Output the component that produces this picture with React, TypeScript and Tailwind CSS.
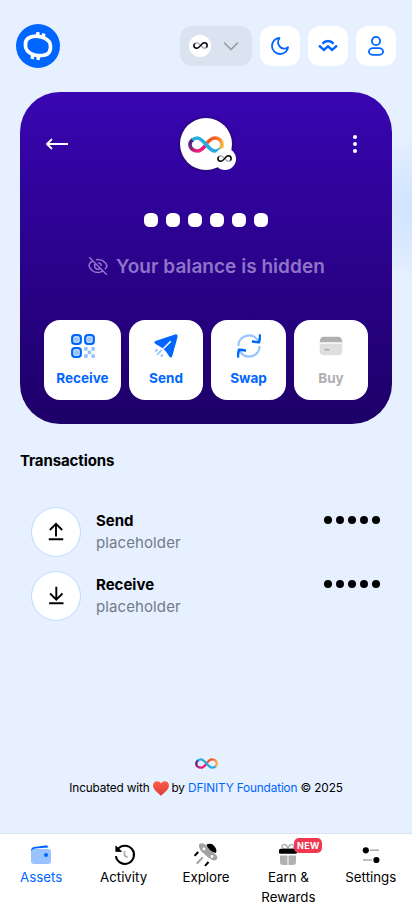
import React from 'react';

function Infinity({ className, id }: { className: string; id: string }) {
  return (
    <svg viewBox="0 0 36 17" className={className} fill="none" strokeWidth="3.7">
      <defs>
        <linearGradient id={id + 'p'} x1="2" y1="3" x2="15" y2="15" gradientUnits="userSpaceOnUse">
          <stop offset="0.2" stopColor="#522785" />
          <stop offset="0.75" stopColor="#ed1e79" />
        </linearGradient>
        <linearGradient id={id + 'o'} x1="21" y1="3" x2="34" y2="13" gradientUnits="userSpaceOnUse">
          <stop offset="0.2" stopColor="#f15a24" />
          <stop offset="0.8" stopColor="#fbb03b" />
        </linearGradient>
      </defs>
      <path d="M5 3.6C3 5 2 6.5 2 8.5C2 12 5 15 9.3 15C12.5 15 15 12.6 18 8.8" stroke={`url(#${id}p)`} />
      <path d="M18 8.2C21 4.5 23.5 2 26.7 2C31 2 34 5 34 8.5C34 10.5 33.5 11.8 32 13.2" stroke={`url(#${id}o)`} />
      <path d="M4.5 4C6 2.5 7.8 2 9.3 2C15.2 2 20.8 15 26.7 15C29 15 31 14.2 32.3 13" stroke="#29abe2" />
    </svg>
  );
}

function MonoInfinity() {
  return (
    <svg viewBox="0 0 36 17" className="w-[15px]" fill="none" strokeWidth="3.6">
      <path d="M4.5 4C6 2.5 7.8 2 9.3 2C15.2 2 20.8 15 26.7 15C29 15 31 14.2 32.3 13" stroke="#a3acb8" />
      <path d="M5 3.6C3 5 2 6.5 2 8.5C2 12 5 15 9.3 15C12.5 15 15 12.6 17 10" stroke="#000" />
      <path d="M17 10C20.5 5.5 23 2 26.7 2C31 2 34 5 34 8.5C34 10.5 33.5 11.8 32 13.2" stroke="#000" />
    </svg>
  );
}

function OisyLogo() {
  return (
    <svg viewBox="0 0 44 44" className="size-11">
      <circle cx="22" cy="22" r="22" fill="#0066ff" />
      <g fill="none" stroke="#fff" strokeWidth="3.7">
        <path d="M16.8 12.5C25 11.2 34 15.2 34.4 21C35.2 26.8 33.2 30.3 28 31.3C18.5 33 10.3 28.5 9.6 22.6C8.7 16.8 11.6 13.4 16.8 12.5Z" />
        <path d="M22 8.1L21.4 13M28 9.5L26.7 14M16 35L17.1 30.5M22 36L22.6 31" strokeWidth="3.4" />
      </g>
    </svg>
  );
}

const tile = 'flex size-10 items-center justify-center rounded-xl bg-white text-[#0066ff]';

function Header() {
  return (
    <header className="flex h-[92px] items-start justify-between px-4 pt-6">
      <OisyLogo />
      <div className="flex gap-2 pt-0.5">
        <div className="flex h-10 w-[72px] items-center justify-between rounded-xl bg-[#dce3f0] pr-3 pl-[9px]">
          <span className="flex size-[22px] items-center justify-center rounded-full bg-white">
            <MonoInfinity />
          </span>
          <svg viewBox="0 0 18 12" className="w-[18px]" fill="none" stroke="#999fa8" strokeWidth="1.7">
            <path d="M2 2.5L9 9.5L16 2.5" />
          </svg>
        </div>
        <div className={tile}>
          <svg viewBox="0 0 20 20" className="size-5" fill="none" stroke="currentColor" strokeWidth="1.8" strokeLinejoin="round">
            <path d="M9.5 2C5.2 2 2 5.6 2 10C2 14.5 5.5 18 10 18C14.5 18 17.9 14.6 18 11.2C16 13.3 12.3 13.1 10.2 11C7.8 8.6 7.6 5 9.5 2Z" />
          </svg>
        </div>
        <div className={tile}>
          <svg viewBox="0 0 20 20" className="size-5" fill="none" stroke="currentColor" strokeWidth="2.4">
            <path d="M1 9.6L5.9 14L10 10.3L14.1 14L19 9.6" />
            <path d="M4.4 7.6C7.8 4.1 12.2 4.1 15.6 7.6" />
          </svg>
        </div>
        <div className={tile}>
          <svg viewBox="0 0 20 20" className="size-5" fill="none" stroke="currentColor" strokeWidth="1.8">
            <circle cx="10" cy="5" r="4.1" />
            <rect x="2.9" y="12.1" width="14.2" height="6.8" rx="4.2" ry="3.4" />
          </svg>
        </div>
      </div>
    </header>
  );
}

function QrIcon() {
  return (
    <svg viewBox="0 0 24 24" className="size-6">
      {[[1.2, 1.2], [14.2, 1.2], [1.2, 14.2]].map(([x, y]) => (
        <g key={`${x}-${y}`}>
          <rect x={x} y={y} width="8.6" height="8.6" rx="2.8" fill="none" stroke="#0066ff" strokeWidth="2.3" />
          <rect x={x + 1.7} y={y + 1.7} width="5.2" height="5.2" rx="2" fill="#99c2ff" />
        </g>
      ))}
      {[[13, 13], [20.3, 13], [16.6, 16.6], [13, 20.3], [20.3, 20.3]].map(([x, y]) => (
        <rect key={`${x}-${y}`} x={x} y={y} width="3.7" height="3.7" rx="0.9" fill="#99c2ff" />
      ))}
    </svg>
  );
}

function SendIcon() {
  return (
    <svg viewBox="0 0 24 24" className="size-6">
      <path d="M1.5 7L21 0.4Q24 -.2 23.6 2.8L18.3 22Q17.3 24.8 15.5 22.7L11.8 17.2L7.2 13.2L1.2 9.7Q-.5 8 1.5 7Z" fill="#0066ff" />
      <path d="M16.8 7.2L9 15" stroke="#fff" strokeWidth="1.5" />
      <path d="M3.5 15.2L1.2 17.5M7.5 16.2L3 20.8M9 20.5L6.8 22.7" stroke="#99c2ff" strokeWidth="1.8" />
    </svg>
  );
}

function SwapIcon() {
  return (
    <svg viewBox="0 0 24 24" className="size-6" fill="none" strokeWidth="2.3">
      <path d="M1.3 12C1.5 1 15.5-2.5 21.3 7.2M22.7 12C22.5 23 8.5 26.5 2.7 16.8" stroke="#99c2ff" />
      <path d="M22.9 .3C23.3 3 22.8 5.7 22 8.2C19.5 8.2 17.2 7.9 15 7.2M1.1 23.7C.7 21 1.2 18.3 2 15.8C4.5 15.8 6.8 16.1 9 16.8" stroke="#0066ff" strokeWidth="2.5" />
    </svg>
  );
}

function BuyIcon() {
  return (
    <svg viewBox="0 0 24 24" className="size-6">
      <path d="M.7 8.5H23.3V17Q23.3 21.3 19 21.3H5Q.7 21.3 .7 17Z" fill="#dedede" />
      <path d="M.7 8.5Q.7 2.7 5 2.7H19Q23.3 2.7 23.3 8.5Z" fill="#b0b0b0" />
      <path d="M.5 9H23.5" stroke="#fff" strokeWidth="1.2" />
      <path d="M5.5 15.7H10.5" stroke="#a6a6a6" strokeWidth="1.5" />
    </svg>
  );
}

const action = 'flex h-20 flex-col items-center gap-[11px] rounded-2xl bg-white pt-3.5 text-[13.5px] leading-4.5 font-bold';

function BalanceCard() {
  return (
    <section className="mx-5 h-[332px] rounded-[40px] bg-linear-to-b from-[#3906b2] to-[#1d0068] px-6 pt-[26px] text-white">
      <div className="flex h-[52px] items-center justify-between pr-[11px] pl-0.5">
        <svg viewBox="0 0 22 12" className="h-3 w-[22px]" fill="none" stroke="currentColor" strokeWidth="1.9" strokeLinejoin="round" strokeLinecap="round">
          <path d="M21.3 6H1M5.4 1.6L1 6L5.4 10.4" />
        </svg>
        <div className="relative ml-[-10px] flex size-[52px] items-center justify-center rounded-full bg-white shadow-[0_0_3px_#000a]">
          <Infinity id="t" className="w-9" />
          <span className="absolute right-[-4px] bottom-0 flex size-[22px] items-center justify-center rounded-full bg-white">
            <MonoInfinity />
          </span>
        </div>
        <svg viewBox="0 0 4 18" className="h-[18px] w-1" fill="currentColor">
          <circle cx="2" cy="2" r="2" /><circle cx="2" cy="9" r="2" /><circle cx="2" cy="16" r="2" />
        </svg>
      </div>
      <div className="mt-[43px] flex justify-center gap-2">
        {[0, 1, 2, 3, 4, 5].map((i) => <span key={i} className="size-3.5 rounded-[5.5px] bg-white" />)}
      </div>
      <div className="mt-[25px] flex h-7 items-center gap-2 pl-11 text-[#8f74c8]">
        <svg viewBox="0 0 20 20" className="size-5 shrink-0" fill="none" stroke="currentColor" strokeWidth="1.5">
          <path d="M1.2 1.2L18.8 18.8M4.5 4.8C2.5 6.2 1 8.7 1 10C2.5 14 6 16.5 10 16.5C11.8 16.5 13.2 16 14.4 15.2M8 3.7C13.5 2.7 17.5 6 19 10C18.6 11.1 17.8 12.3 16.8 13.3M7.5 7.5C5 10.3 8.2 15 12 12.5M10.2 6.8C12.3 7 13.3 8.6 13.3 10" />
        </svg>
        <span className="pt-0.5 text-[19px] leading-7 font-semibold tracking-[0.03px] whitespace-nowrap">Your balance is hidden</span>
      </div>
      <div className="mt-10 grid grid-cols-[77px_74px_75px_74px] gap-2 text-[#0066ff]">
        <div className={action}><QrIcon /><span>Receive</span></div>
        <div className={action}><SendIcon /><span>Send</span></div>
        <div className={action}><SwapIcon /><span>Swap</span></div>
        <div className={action + ' text-[#b0b0b0]'}><BuyIcon /><span>Buy</span></div>
      </div>
    </section>
  );
}

function Transaction({ name, down = false }: { name: string; down?: boolean }) {
  return (
    <li className="flex h-16 items-center">
      <span className="flex size-[50px] items-center justify-center rounded-full border border-[#bfd7ff] bg-white">
        <svg viewBox="0 0 24 24" className="size-6" fill="none" stroke="#000" strokeWidth="1.9">
          {down ? <path d="M12.3 2.7V15.5M6.1 9.5L12.3 15.7L18.5 9.5M5.1 19.3H19.5" /> : <path d="M12 16.5V4M5.8 10L12 3.8L18.2 10M4.8 19.3H19.2" />}
        </svg>
      </span>
      <span className="ml-[15px] flex flex-1 flex-col pb-px text-[15px] leading-[22px]">
        <span className="font-bold text-black">{name}</span>
        <span className="tracking-[0.1px] text-[#737b88]">placeholder</span>
      </span>
      <span className="flex gap-1 pb-6">
        {[0, 1, 2, 3, 4].map((i) => <span key={i} className="size-2 rounded-full bg-black" />)}
      </span>
    </li>
  );
}

function WalletIcon() {
  return (
    <svg viewBox="0 0 24 24" className="size-6">
      <rect x="2" y="6" width="20" height="15" rx="3" fill="#99c2ff" />
      <path d="M2 8Q2 4.3 5 3.9L18 2.2L19.5 4.6L6.5 5.6Q4 5.8 2 8Z" fill="#0066ff" />
      <circle cx="17" cy="12" r="2" fill="#0066ff" />
    </svg>
  );
}

function HistoryIcon() {
  return (
    <svg viewBox="0 0 24 24" className="size-6 translate-x-px" fill="none">
      <path d="M4.7 6.2A9.1 9.1 0 1 1 2.9 13.2" stroke="#000" strokeWidth="2.1" />
      <path d="M2.8 3V8.4H8.6Z" fill="#000" stroke="#000" strokeWidth="0.8" />
      <path d="M11.5 8V12.5L14.5 14.5" stroke="#aaa" strokeWidth="1.7" />
    </svg>
  );
}

function RocketIcon() {
  return (
    <svg viewBox="0 0 24 24" className="size-6 overflow-visible">
      <path d="M5.3 4.5Q3.8 .5 7.5 .3Q10.8 .3 14 4.2L20.5 10.5Q23.8 13 23.3 15.8Q21.5 18.2 18.3 17L13.5 14L8 9Q6 7 5.3 4.5Z" fill="#a3a3a3" />
      <path d="M12.5 1.6Q16.5-.4 19.5 2.2Q23.5 6 22 10Q18.5 9.5 15.8 6.8Q13 4.5 12.5 1.6Z" fill="#000" />
      <circle cx="10" cy="6" r="1.4" fill="#fff" /><circle cx="18" cy="13.5" r="1.4" fill="#fff" />
      <path d="M4.2 9L.6 12.9M14.5 19L11 22.9" stroke="#000" strokeWidth="2" />
      <path d="M8.8 14.2L2.7 20.8" stroke="#a3a3a3" strokeWidth="2" />
    </svg>
  );
}

function GiftIcon() {
  return (
    <svg viewBox="0 0 24 24" className="size-6">
      <path d="M12 6C5.5 7 4.5 2 7.5 1.6C10.5 1.2 11.5 3.5 12 6C12.5 3.5 13.5 1.2 16.5 1.6C19.5 2 18.5 7 12 6Z" fill="none" stroke="#b0b0b0" strokeWidth="1.4" />
      <rect x="3" y="5.7" width="18" height="5" rx="1.5" fill="#000" />
      <path d="M4 12.5H11.5V22H7Q4 22 4 19ZM12.5 12.5H20V19Q20 22 17 22H12.5Z" fill="#b0b0b0" />
    </svg>
  );
}

function SettingsIcon() {
  return (
    <svg viewBox="0 0 24 24" className="size-6" strokeWidth="1.5" stroke="#aaa">
      <path d="M11 7.3H20M4 17H13" />
      <circle cx="6.8" cy="7.3" r="3.1" fill="#000" stroke="none" /><circle cx="17.4" cy="17" r="3.1" fill="#000" stroke="none" />
    </svg>
  );
}

const navItem = 'flex flex-col items-center pt-[9px] text-[13.3px] leading-5';

export default function App() {
  return (
    <main className="flex h-[915px] w-[412px] flex-col overflow-hidden bg-[#e6f0ff] bg-[radial-gradient(ellipse_110px_75px_at_440px_208px,#cde1ff_0%,#d3e5ff_35%,transparent_100%)] font-['Inter','Liberation_Sans',sans-serif] text-black">
      <Header />
      <BalanceCard />
      <h2 className="mt-[25px] pl-5 text-[15px] leading-6 font-bold tracking-[-0.1px]">Transactions</h2>
      <ul className="mt-[27px] pr-8 pl-[31px]">
        <Transaction name="Send" />
        <Transaction name="Receive" down />
      </ul>
      <footer className="mt-[130px] flex flex-col items-center text-[11.8px] leading-4">
        <Infinity id="f" className="h-[11px] w-[23px]" />
        <p className="mt-[11px] flex items-center tracking-[-0.15px] whitespace-nowrap">
          Incubated with
          <svg viewBox="0 0 16 15" className="mx-[3px] h-[15px] w-4">
            <defs><linearGradient id="heart" x1="0" y1="0" x2="0" y2="1"><stop stopColor="#ff5b47" /><stop offset="1" stopColor="#d93e36" /></linearGradient></defs>
            <path d="M8 15C5.5 11.8 0 9 0 4.5C0 0 6-1.2 8 2.6C10-1.2 16 0 16 4.5C16 9 10.5 11.8 8 15Z" fill="url(#heart)" />
          </svg>
          by&nbsp;<span className="text-[#0066ff]">DFINITY Foundation</span>&nbsp;© 2025
        </p>
      </footer>
      <nav className="mt-auto grid h-[82px] grid-cols-5 border-t border-[#dce3f0] bg-white">
        <div className={navItem + ' text-[#0066ff]'}><WalletIcon /><span>Assets</span></div>
        <div className={navItem}><HistoryIcon /><span>Activity</span></div>
        <div className={navItem}><RocketIcon /><span>Explore</span></div>
        <div className={navItem}>
          <span className="relative">
            <GiftIcon />
            <span className="absolute top-[-5px] left-[18px] flex h-[15px] w-[28px] items-center justify-center rounded-[5px] bg-[#f03850] text-[9px] leading-none font-bold tracking-[0.3px] text-white">NEW</span>
          </span>
          <span className="text-center">Earn &amp;<br />Rewards</span>
        </div>
        <div className={navItem}><SettingsIcon /><span>Settings</span></div>
      </nav>
    </main>
  );
}
